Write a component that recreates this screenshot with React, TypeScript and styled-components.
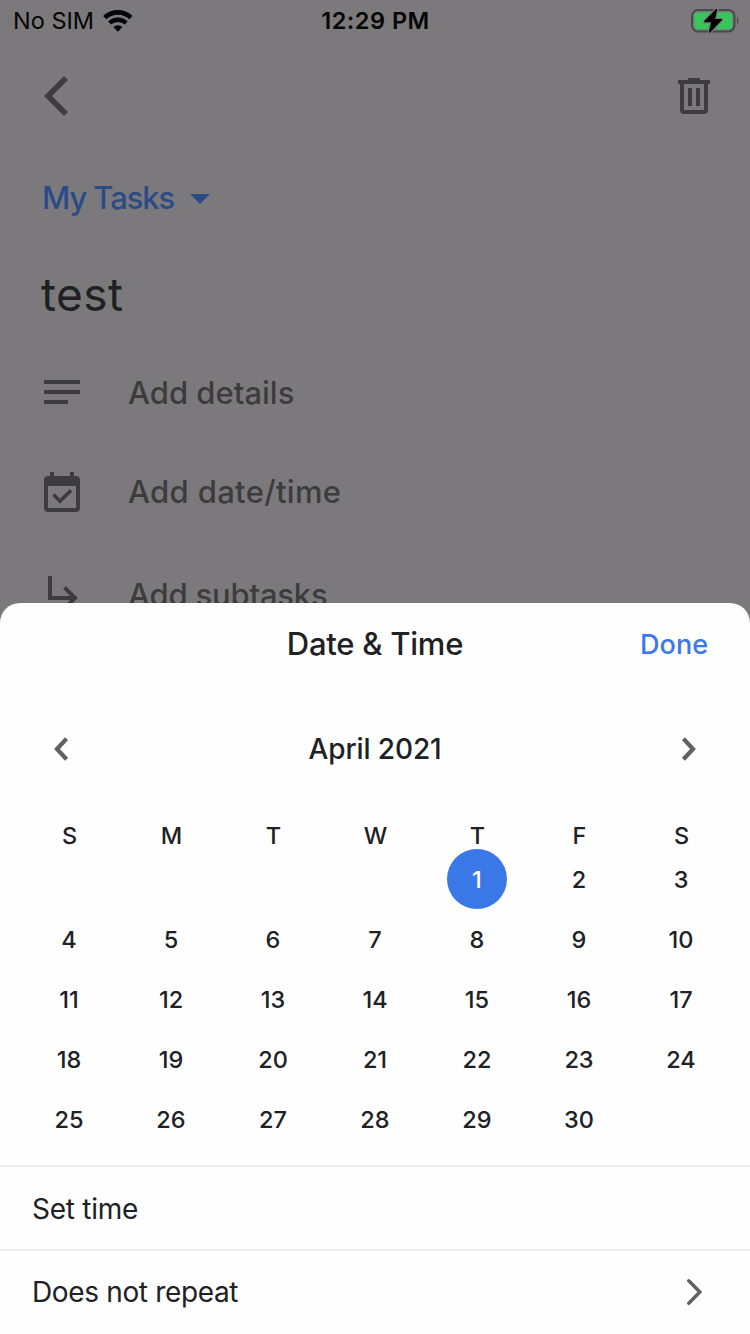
import React from 'react';
import styled, { createGlobalStyle } from 'styled-components';

const GlobalStyle = createGlobalStyle`
  * { box-sizing: border-box; }
  body { margin: 0; background: #7c797c; }
  button { border: 0; padding: 0; margin: 0; background: none; font: inherit; color: inherit; display: flex; }
  svg { display: block; flex: none; }
`;

const Screen = styled.div`
  position: relative;
  width: 750px;
  height: 1334px;
  overflow: hidden;
  background: #7c797c;
  font-family: Inter, 'Liberation Sans', sans-serif;
`;

const Label = styled.span<{ $size: number; $weight?: number; $spacing?: number }>`
  font-size: ${(p) => p.$size}px;
  font-weight: ${(p) => p.$weight ?? 400};
  letter-spacing: ${(p) => p.$spacing ?? 0}px;
  line-height: 1;
  white-space: pre;
`;

const StatusBar = styled.header`
  display: grid;
  grid-template-columns: 1fr auto 1fr;
  align-items: center;
  height: 41px;
  padding: 0 12px 0 13px;
  color: #050505;
`;

const Carrier = styled.div`
  display: flex;
  align-items: center;
  gap: 9px;
`;

const BatterySlot = styled.div`
  display: flex;
  justify-content: flex-end;
  margin-right: -1px;
`;

const Toolbar = styled.nav`
  display: flex;
  justify-content: space-between;
  align-items: center;
  height: 110px;
  padding: 0 40px 0 44px;
  color: #3d3d3f;
`;

const ListPicker = styled.div`
  display: flex;
  align-items: center;
  gap: 16px;
  height: 95px;
  padding-left: 42px;
  color: #2b4b87;

  ${Label} {
    padding-bottom: 2px;
  }
`;

const TaskTitle = styled.div`
  display: flex;
  align-items: center;
  height: 97px;
  padding: 0 0 2px 41px;
  color: #1f2022;
`;

const DetailRow = styled.div<{ $height: number }>`
  display: flex;
  align-items: center;
  gap: 48px;
  height: ${(p) => p.$height}px;
  padding-left: 44px;
  color: #3c3c3e;
`;

const DateLabel = styled(Label)`
  padding-bottom: 1px;
`;

const Sheet = styled.section`
  position: absolute;
  left: 0;
  right: 0;
  bottom: 0;
  height: 731px;
  background: #fefefe;
  border-radius: 20px 20px 0 0;
  color: #202124;
`;

const SheetHeader = styled.div`
  display: grid;
  grid-template-columns: 1fr auto 1fr;
  align-items: center;
  height: 82px;
  padding: 0 42px;
`;

const SheetTitle = styled(Label)`
  padding-bottom: 1px;
`;

const DoneButton = styled.button`
  justify-self: end;
  color: #3b78e7;
`;

const MonthNav = styled.div`
  display: flex;
  justify-content: space-between;
  align-items: center;
  height: 128px;
  padding: 0 54px;
  color: #616161;
`;

const MonthName = styled(Label)`
  color: #202124;
`;

const Week = styled.div<{ $height: number }>`
  display: grid;
  grid-template-columns: repeat(7, 102px);
  justify-content: center;
  align-items: center;
  justify-items: center;
  height: ${(p) => p.$height}px;
`;

const WeekdayRow = styled(Week)`
  padding: 9px 0 0 1px;
`;

const Day = styled.span<{ $selected?: boolean }>`
  display: flex;
  align-items: center;
  justify-content: center;
  width: 60px;
  height: 60px;
  padding-top: 1px;
  border-radius: 50%;
  background: ${(p) => (p.$selected ? '#3b78e7' : 'transparent')};
  color: ${(p) => (p.$selected ? '#fff' : 'inherit')};
`;

const Options = styled.div`
  margin-top: 16px;
`;

const OptionRow = styled.div<{ $nudge?: number }>`
  display: flex;
  justify-content: space-between;
  align-items: center;
  height: 84px;
  padding: 0 48px 0 32px;
  border-top: 2px solid #ececec;

  ${Label} {
    padding-top: ${(p) => p.$nudge ?? 0}px;
  }
`;

const WifiIcon = () => (
  <svg width="30" height="22" viewBox="0 0 30 22" fill="none" stroke="currentColor">
    <path d="M1.7 7.6a19 19 0 0 1 26.2 0" strokeWidth="4.6" />
    <path d="M6.6 13a12.2 12.2 0 0 1 16.6 0" strokeWidth="4.3" />
    <path d="M14.9 21.8l-4.5-4.7a6.6 6.6 0 0 1 9 0z" fill="currentColor" stroke="none" />
  </svg>
);

const BatteryIcon = () => (
  <svg width="48" height="26" viewBox="0 0 48 26">
    <rect x="1" y="2" width="42.5" height="21.5" rx="6" fill="none" stroke="#4b494b" strokeWidth="2" />
    <rect x="3.4" y="4.4" width="37.8" height="16.8" rx="3.6" fill="#35c759" />
    <path d="M46 9.2c1.9.9 2 6.2 0 7.2z" fill="#4b494b" />
    <g strokeLinejoin="round">
      <path d="M25.6 1.6L13.8 13.6h7.2L18.6 24 30.4 11.6h-7.2z" fill="none" stroke="#7c797c" strokeWidth="3.8" />
      <path d="M25.6 1.6L13.8 13.6h7.2L18.6 24 30.4 11.6h-7.2z" fill="#000" stroke="#000" strokeWidth="1.4" />
    </g>
  </svg>
);

const BackIcon = () => (
  <svg width="24" height="40" viewBox="0 0 24 40" fill="currentColor">
    <path d="M20 0l4 4L8 20l16 16-4 4L0 20z" />
  </svg>
);

const TrashIcon = () => (
  <svg width="32" height="36" viewBox="0 0 32 36" fill="currentColor">
    <path d="M10 0h12v2h10v4h-2v26a4 4 0 0 1-4 4H6a4 4 0 0 1-4-4V6H0V2h10zM6 6v26h20V6z" fillRule="evenodd" />
    <path d="M10 10h4v18h-4zM18 10h4v18h-4z" />
  </svg>
);

const CaretIcon = () => (
  <svg width="20" height="10" viewBox="0 0 20 10" fill="currentColor">
    <path d="M0 0h20L10 10z" />
  </svg>
);

const NotesIcon = () => (
  <svg width="36" height="24" viewBox="0 0 36 24" fill="currentColor">
    <path d="M0 0h36v4H0zM0 10h36v4H0zM0 20h24v4H0z" />
  </svg>
);

const CalendarIcon = () => (
  <svg width="36" height="40" viewBox="0 0 36 40">
    <path
      fill="currentColor"
      fillRule="evenodd"
      d="M6 0h4v4h16V0h4v4h2a4 4 0 0 1 4 4v28a4 4 0 0 1-4 4H4a4 4 0 0 1-4-4V8a4 4 0 0 1 4-4h2zM4 14v22h28V14z"
    />
    <path d="M9.4 22.6l6.6 6.6L27 18.4" fill="none" stroke="currentColor" strokeWidth="3.6" />
  </svg>
);

const SubtaskIcon = () => (
  <svg width="36" height="36" viewBox="0 0 36 36" fill="none" stroke="currentColor" strokeWidth="4">
    <path d="M6 0v22h25M20.5 11.5L31 22 20.5 32.500" />
  </svg>
);

const Chevron = ({ flip = false }: { flip?: boolean }) => (
  <svg width="14" height="24" viewBox="0 0 14 24" fill="none" stroke="currentColor" strokeWidth="4.3">
    <path d={flip ? 'M12.6 1.6L3 12l9.6 10.400' : 'M1.4 1.6L11 12 1.4 22.4'} />
  </svg>
);

const ThinChevron = () => (
  <svg width="15" height="26" viewBox="0 0 15 26" fill="none" stroke="#616161" strokeWidth="3.4" strokeLinecap="round">
    <path d="M1.8 1.8L12.8 13 1.8 24.2" />
  </svg>
);

const weekdays = ['S', 'M', 'T', 'W', 'T', 'F', 'S'];
const firstWeekday = 4;
const daysInMonth = 30;
const selectedDay = 1;
const weeks = Array.from({ length: 5 }, (_, w) =>
  Array.from({ length: 7 }, (_, d) => {
    const day = w * 7 + d - firstWeekday + 1;
    return day >= 1 && day <= daysInMonth ? day : null;
  }),
);

export default function App() {
  return (
    <Screen>
      <GlobalStyle />
      <StatusBar>
        <Carrier>
          <Label $size={23.5}>No SIM</Label>
          <WifiIcon />
        </Carrier>
        <Label $size={23.5} $weight={600} $spacing={0.5}>12:29 PM</Label>
        <BatterySlot>
          <BatteryIcon />
        </BatterySlot>
      </StatusBar>
      <Toolbar>
        <button aria-label="Back"><BackIcon /></button>
        <button aria-label="Delete"><TrashIcon /></button>
      </Toolbar>
      <ListPicker>
        <Label $size={31} $weight={500} $spacing={-1.1}>My Tasks</Label>
        <CaretIcon />
      </ListPicker>
      <TaskTitle>
        <Label $size={46} $spacing={0.4}>test</Label>
      </TaskTitle>
      <DetailRow $height={98}>
        <NotesIcon />
        <Label $size={31} $weight={500}>Add details</Label>
      </DetailRow>
      <DetailRow $height={102}>
        <CalendarIcon />
        <DateLabel $size={31} $weight={500} $spacing={0.33}>Add date/time</DateLabel>
      </DetailRow>
      <DetailRow $height={102}>
        <SubtaskIcon />
        <Label $size={31} $weight={500} $spacing={-0.2}>Add subtasks</Label>
      </DetailRow>

      <Sheet>
        <SheetHeader>
          <span />
          <SheetTitle $size={31} $weight={500} $spacing={-0.25}>Date &amp; Time</SheetTitle>
          <DoneButton><Label $size={27} $weight={500}>Done</Label></DoneButton>
        </SheetHeader>
        <MonthNav>
          <button aria-label="Previous month"><Chevron flip /></button>
          <MonthName $size={28} $weight={500} $spacing={-0.1}>April 2021</MonthName>
          <button aria-label="Next month"><Chevron /></button>
        </MonthNav>
        <WeekdayRow $height={36}>
          {weekdays.map((name, i) => (
            <Label key={i} $size={23.5} $weight={500}>{name}</Label>
          ))}
        </WeekdayRow>
        {weeks.map((week, i) => (
          <Week key={i} $height={60}>
            {week.map((day, j) => (
              <Day key={j} $selected={day === selectedDay}>
                <Label $size={23.5} $weight={500}>{day}</Label>
              </Day>
            ))}
          </Week>
        ))}
        <Options>
          <OptionRow $nudge={1}>
            <Label $size={28} $spacing={-0.25}>Set time</Label>
          </OptionRow>
          <OptionRow>
            <Label $size={28} $spacing={-0.35}>Does not repeat</Label>
            <ThinChevron />
          </OptionRow>
        </Options>
      </Sheet>
    </Screen>
  );
}
